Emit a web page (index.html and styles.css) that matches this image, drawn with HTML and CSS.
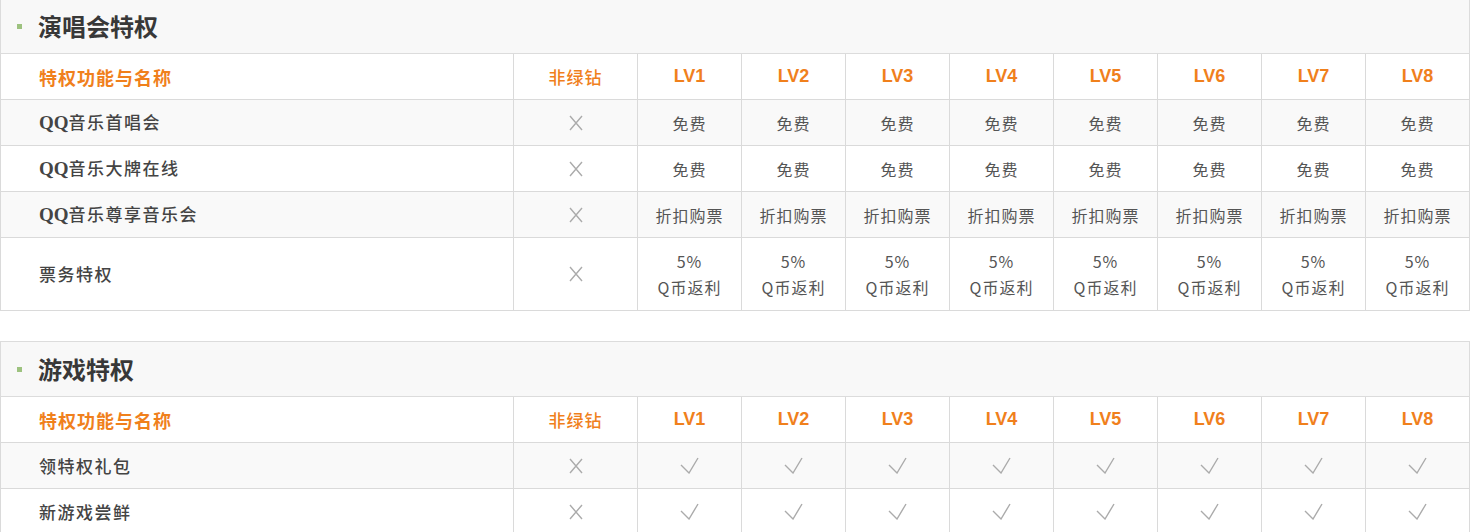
FILE: index.html
```html
<!DOCTYPE html>
<html lang="zh-CN">
<head>
<meta charset="utf-8">
<title>绿钻特权</title>
<link rel="stylesheet" href="styles.css">
</head>
<body>
<div class="page">
  <section class="block">
    <div class="block-head"><span class="dot"></span><h2>演唱会特权</h2></div>
    <table class="priv">
      <colgroup>
        <col class="c-name"><col class="c-non">
        <col class="c-lv"><col class="c-lv"><col class="c-lv"><col class="c-lv">
        <col class="c-lv"><col class="c-lv"><col class="c-lv"><col class="c-lv">
      </colgroup>
      <thead>
        <tr>
          <th class="name">特权功能与名称</th><th class="cn">非绿钻</th>
          <th>LV1</th><th>LV2</th><th>LV3</th><th>LV4</th><th>LV5</th><th>LV6</th><th>LV7</th><th>LV8</th>
        </tr>
      </thead>
      <tbody>
        <tr class="alt">
          <td class="name"><b>QQ</b>音乐首唱会</td>
          <td><svg class="ic-x" width="14" height="16" viewBox="0 0 14 16"><path d="M1 1L13 15M13 1L1 15"/></svg></td>
          <td>免费</td><td>免费</td><td>免费</td><td>免费</td><td>免费</td><td>免费</td><td>免费</td><td>免费</td>
        </tr>
        <tr>
          <td class="name"><b>QQ</b>音乐大牌在线</td>
          <td><svg class="ic-x" width="14" height="16" viewBox="0 0 14 16"><path d="M1 1L13 15M13 1L1 15"/></svg></td>
          <td>免费</td><td>免费</td><td>免费</td><td>免费</td><td>免费</td><td>免费</td><td>免费</td><td>免费</td>
        </tr>
        <tr class="alt">
          <td class="name"><b>QQ</b>音乐尊享音乐会</td>
          <td><svg class="ic-x" width="14" height="16" viewBox="0 0 14 16"><path d="M1 1L13 15M13 1L1 15"/></svg></td>
          <td>折扣购票</td><td>折扣购票</td><td>折扣购票</td><td>折扣购票</td><td>折扣购票</td><td>折扣购票</td><td>折扣购票</td><td>折扣购票</td>
        </tr>
        <tr class="tall">
          <td class="name">票务特权</td>
          <td><svg class="ic-x" width="14" height="16" viewBox="0 0 14 16"><path d="M1 1L13 15M13 1L1 15"/></svg></td>
          <td>5%<br>Q币返利</td><td>5%<br>Q币返利</td><td>5%<br>Q币返利</td><td>5%<br>Q币返利</td>
          <td>5%<br>Q币返利</td><td>5%<br>Q币返利</td><td>5%<br>Q币返利</td><td>5%<br>Q币返利</td>
        </tr>
      </tbody>
    </table>
  </section>

  <section class="block">
    <div class="block-head"><span class="dot"></span><h2>游戏特权</h2></div>
    <table class="priv">
      <colgroup>
        <col class="c-name"><col class="c-non">
        <col class="c-lv"><col class="c-lv"><col class="c-lv"><col class="c-lv">
        <col class="c-lv"><col class="c-lv"><col class="c-lv"><col class="c-lv">
      </colgroup>
      <thead>
        <tr>
          <th class="name">特权功能与名称</th><th class="cn">非绿钻</th>
          <th>LV1</th><th>LV2</th><th>LV3</th><th>LV4</th><th>LV5</th><th>LV6</th><th>LV7</th><th>LV8</th>
        </tr>
      </thead>
      <tbody>
        <tr class="alt">
          <td class="name">领特权礼包</td>
          <td><svg class="ic-x" width="14" height="16" viewBox="0 0 14 16"><path d="M1 1L13 15M13 1L1 15"/></svg></td>
          <td><svg class="ic-ok" width="19" height="17" viewBox="0 0 19 17"><path d="M1 8L9 16L18 1"/></svg></td>
          <td><svg class="ic-ok" width="19" height="17" viewBox="0 0 19 17"><path d="M1 8L9 16L18 1"/></svg></td>
          <td><svg class="ic-ok" width="19" height="17" viewBox="0 0 19 17"><path d="M1 8L9 16L18 1"/></svg></td>
          <td><svg class="ic-ok" width="19" height="17" viewBox="0 0 19 17"><path d="M1 8L9 16L18 1"/></svg></td>
          <td><svg class="ic-ok" width="19" height="17" viewBox="0 0 19 17"><path d="M1 8L9 16L18 1"/></svg></td>
          <td><svg class="ic-ok" width="19" height="17" viewBox="0 0 19 17"><path d="M1 8L9 16L18 1"/></svg></td>
          <td><svg class="ic-ok" width="19" height="17" viewBox="0 0 19 17"><path d="M1 8L9 16L18 1"/></svg></td>
          <td><svg class="ic-ok" width="19" height="17" viewBox="0 0 19 17"><path d="M1 8L9 16L18 1"/></svg></td>
        </tr>
        <tr>
          <td class="name">新游戏尝鲜</td>
          <td><svg class="ic-x" width="14" height="16" viewBox="0 0 14 16"><path d="M1 1L13 15M13 1L1 15"/></svg></td>
          <td><svg class="ic-ok" width="19" height="17" viewBox="0 0 19 17"><path d="M1 8L9 16L18 1"/></svg></td>
          <td><svg class="ic-ok" width="19" height="17" viewBox="0 0 19 17"><path d="M1 8L9 16L18 1"/></svg></td>
          <td><svg class="ic-ok" width="19" height="17" viewBox="0 0 19 17"><path d="M1 8L9 16L18 1"/></svg></td>
          <td><svg class="ic-ok" width="19" height="17" viewBox="0 0 19 17"><path d="M1 8L9 16L18 1"/></svg></td>
          <td><svg class="ic-ok" width="19" height="17" viewBox="0 0 19 17"><path d="M1 8L9 16L18 1"/></svg></td>
          <td><svg class="ic-ok" width="19" height="17" viewBox="0 0 19 17"><path d="M1 8L9 16L18 1"/></svg></td>
          <td><svg class="ic-ok" width="19" height="17" viewBox="0 0 19 17"><path d="M1 8L9 16L18 1"/></svg></td>
          <td><svg class="ic-ok" width="19" height="17" viewBox="0 0 19 17"><path d="M1 8L9 16L18 1"/></svg></td>
        </tr>
      </tbody>
    </table>
  </section>
</div>
</body>
</html>
```

FILE: styles.css
```css
html, body {
  margin: 0;
  padding: 0;
  background: #fff;
}
body {
  font-family: "Noto Sans CJK SC", "Noto Sans", sans-serif;
  color: #555;
}
.page {
  width: 1470px;
  margin-top: -2px;
}
.block + .block {
  margin-top: 30px;
}
.block-head {
  display: flex;
  align-items: center;
  height: 54px;
  border: 1px solid #dcdcdc;
  background: #f8f8f8;
  padding-left: 16px;
}
.dot {
  width: 5px;
  height: 5px;
  background: #9dc27f;
  margin-right: 16px;
  flex: none;
}
.block-head h2 {
  margin: 0;
  font-size: 24px;
  line-height: 1;
  font-weight: bold;
  color: #383838;
}
.priv {
  width: 1470px;
  border-collapse: collapse;
  table-layout: fixed;
}
.c-name { width: 513px; }
.c-non { width: 124px; }
.c-lv { width: 104px; }
.priv th,
.priv td {
  border: 1px solid #dadada;
  border-top: none;
  height: 45px;
  padding: 0;
  text-align: center;
  vertical-align: middle;
}
.priv tbody tr td {
  border-top: 1px solid #dadada;
}
.priv th {
  font-family: "Liberation Sans", "Noto Sans CJK SC", sans-serif;
  font-size: 18px;
  font-weight: bold;
  color: #f0801c;
}
.priv th.name,
.priv th.cn {
  font-family: "Noto Sans CJK SC", sans-serif;
  font-size: 18px;
  letter-spacing: 1px;
}
.priv th.name {
  font-weight: bold;
}
.priv th.cn {
  font-weight: 500;
  font-size: 17px;
}
.priv .name {
  text-align: left;
  padding-left: 38px;
}
.priv td {
  font-size: 16px;
  line-height: 26px;
  letter-spacing: 1px;
  color: #555;
}
.priv td.name {
  font-size: 17px;
  letter-spacing: 1.5px;
  color: #444;
  font-weight: 500;
}
.priv td.name b {
  font-family: "Liberation Serif", serif;
  font-size: 19px;
  font-weight: bold;
  letter-spacing: 0;
}
.priv tr.alt td {
  background: #f9f9f9;
}
.priv tr.tall td {
  height: 72px;
}
.ic-x,
.ic-ok {
  display: block;
  margin: 0 auto;
  fill: none;
  stroke: #ababab;
  stroke-width: 1.4;
}
```
